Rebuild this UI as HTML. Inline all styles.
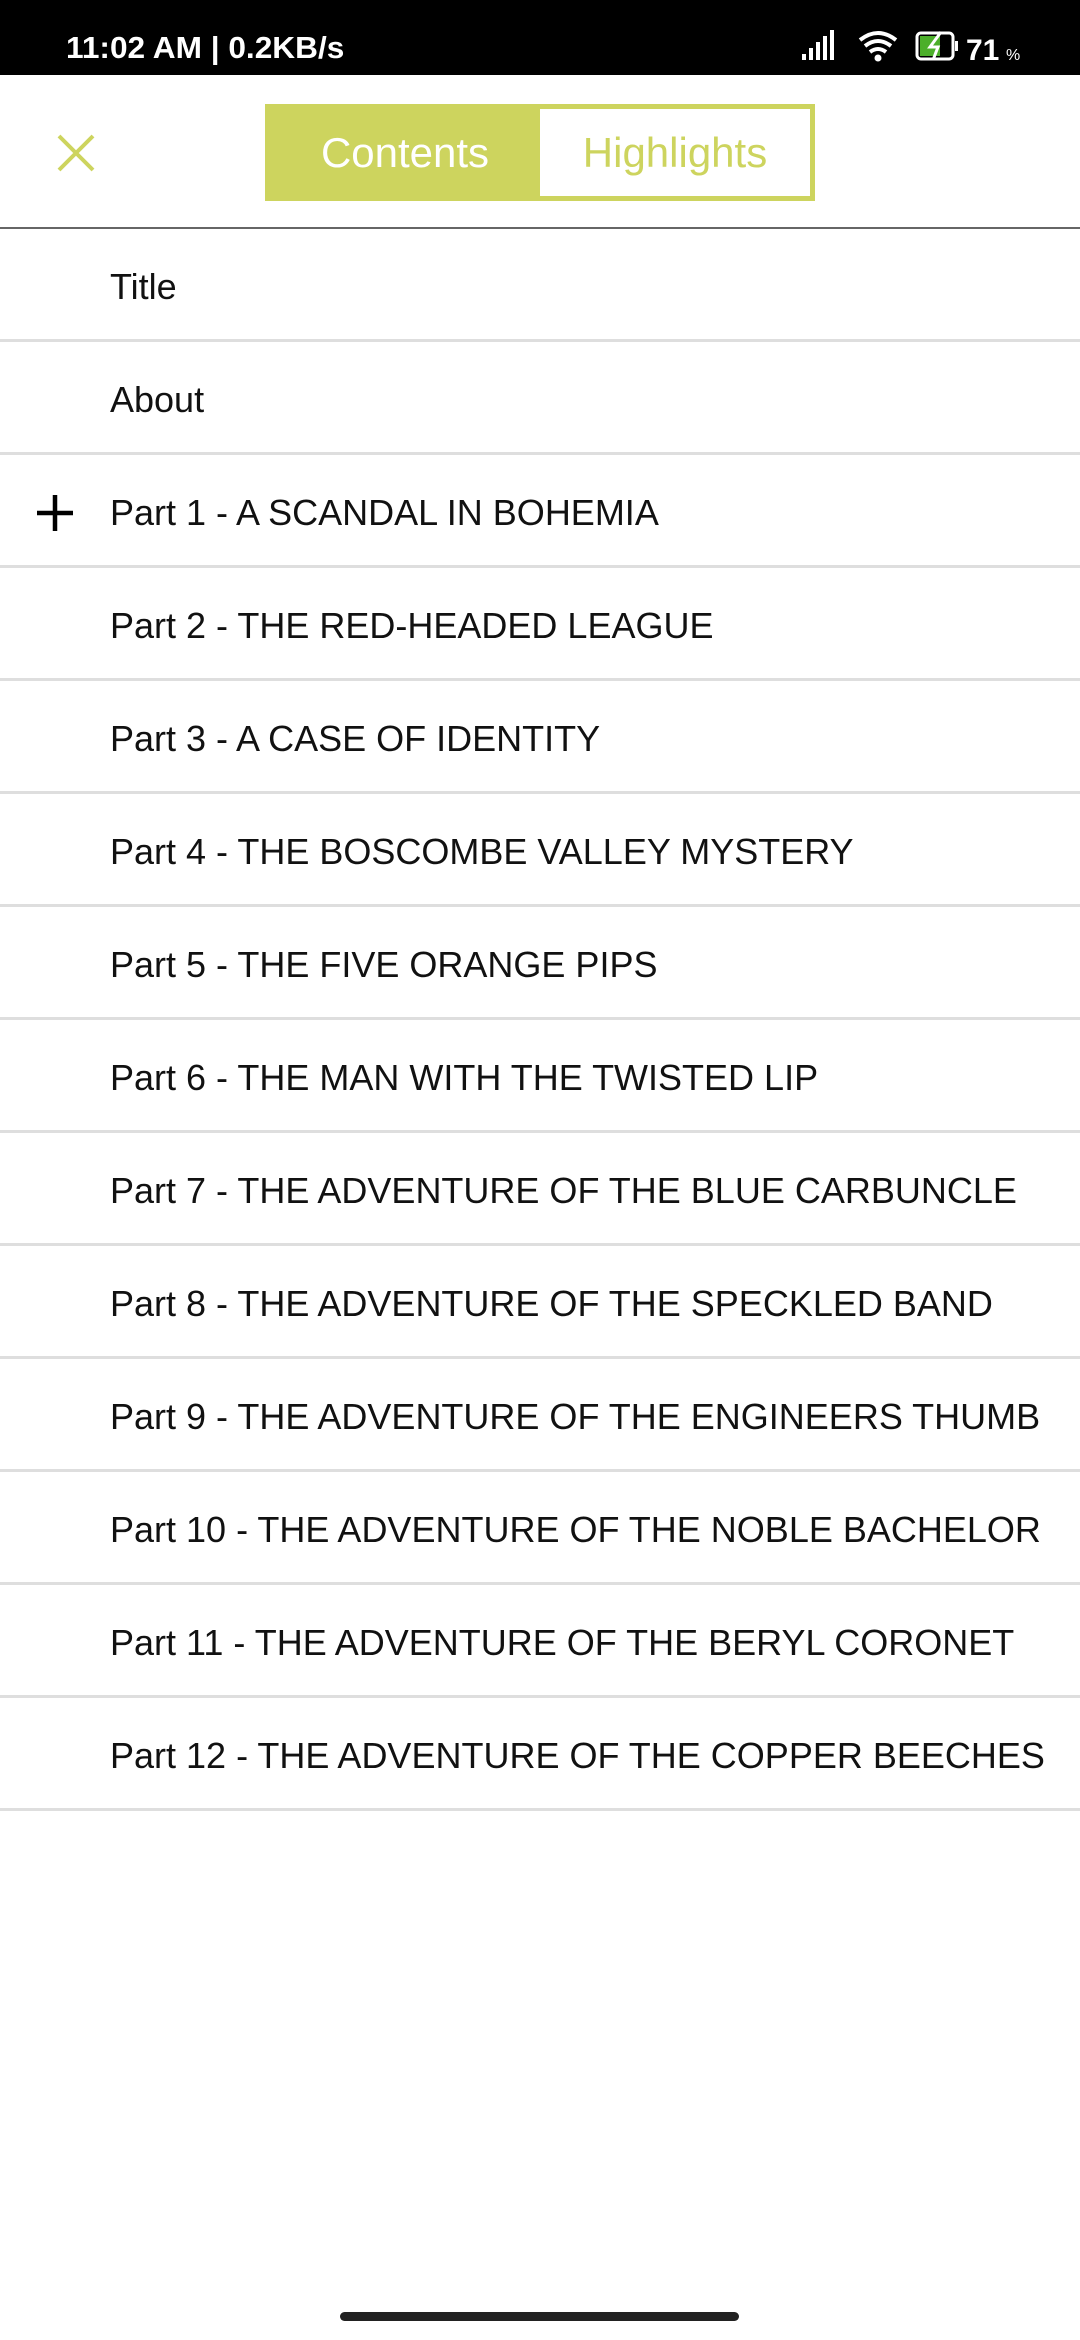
<!DOCTYPE html>
<html><head><meta charset="utf-8"><style>
*{margin:0;padding:0;box-sizing:border-box}
body{width:1080px;height:2340px;background:#fff;font-family:"Liberation Sans",sans-serif;position:relative;overflow:hidden}
.sb{position:absolute;left:0;top:0;width:1080px;height:75px;background:#000;color:#fff}
.sb .t{position:absolute;left:66px;top:30px;font-size:31px;font-weight:bold;transform:scaleX(1.02);transform-origin:left}
.hdr{position:absolute;top:75px;left:0;width:1080px;height:154px;border-bottom:2px solid #666}
.tabs{position:absolute;left:265px;top:29px;width:550px;height:97px;border:5px solid #cdd45e;display:flex}
.tabs div{flex:1;display:flex;align-items:center;justify-content:center;font-size:42px}
.tabs .a{background:#cdd45e;color:#fff}
.tabs .b{color:#cdd45e}
.row{position:absolute;left:0;width:1080px;height:113px;border-bottom:3px solid #dedede}
.row span{position:absolute;left:110px;top:37px;font-size:36px;color:#111;white-space:nowrap;transform:scaleX(1.0);transform-origin:left}
</style></head><body>
<div class="sb"><div class="t">11:02 AM | 0.2KB/s</div>
<svg style="position:absolute;left:800px;top:28px" width="280" height="40">
<rect x="2" y="26" width="4" height="6" fill="#fff"/><rect x="9" y="20" width="4" height="12" fill="#fff"/><rect x="16" y="14" width="4" height="18" fill="#fff"/><rect x="23" y="8" width="4" height="24" fill="#fff"/><rect x="30" y="2" width="4" height="30" fill="#fff"/>
<path d="M60 12 Q78 -2 96 12 M65 18 Q78 8 91 18 M70 24 Q78 18 86 24" stroke="#fff" stroke-width="4" fill="none"/><circle cx="78" cy="30" r="3.5" fill="#fff"/>
<rect x="117" y="5" width="36" height="26" rx="4" stroke="#fff" stroke-width="3" fill="none"/><rect x="120" y="8" width="20" height="20" fill="#4caf2a"/><path d="M141 4 L130 19 L138 19 L133 32" stroke="#fff" stroke-width="3" fill="none"/><rect x="155" y="13" width="3" height="10" fill="#fff"/>
<text x="166" y="32" fill="#fff" font-size="30" font-weight="bold" font-family="Liberation Sans">71</text><text x="206" y="32" fill="#fff" font-size="16" font-family="Liberation Sans">%</text>
</svg></div>
<div class="hdr">
<svg style="position:absolute;left:57px;top:59px" width="38" height="38"><path d="M2 2L36 36M36 2L2 36" stroke="#cdd45e" stroke-width="4"/></svg>
<div class="tabs"><div class="a">Contents</div><div class="b">Highlights</div></div>
</div>
<div class="row" style="top:229px"><span>Title</span></div>
<div class="row" style="top:342px"><span>About</span></div>
<div class="row" style="top:455px"><svg style="position:absolute;left:35px;top:38px" width="40" height="40"><path d="M20 2V38M2 20H38" stroke="#000" stroke-width="4.5"/></svg><span>Part 1 - A SCANDAL IN BOHEMIA</span></div>
<div class="row" style="top:568px"><span>Part 2 - THE RED-HEADED LEAGUE</span></div>
<div class="row" style="top:681px"><span>Part 3 - A CASE OF IDENTITY</span></div>
<div class="row" style="top:794px"><span>Part 4 - THE BOSCOMBE VALLEY MYSTERY</span></div>
<div class="row" style="top:907px"><span>Part 5 - THE FIVE ORANGE PIPS</span></div>
<div class="row" style="top:1020px"><span>Part 6 - THE MAN WITH THE TWISTED LIP</span></div>
<div class="row" style="top:1133px"><span>Part 7 - THE ADVENTURE OF THE BLUE CARBUNCLE</span></div>
<div class="row" style="top:1246px"><span>Part 8 - THE ADVENTURE OF THE SPECKLED BAND</span></div>
<div class="row" style="top:1359px"><span>Part 9 - THE ADVENTURE OF THE ENGINEERS THUMB</span></div>
<div class="row" style="top:1472px"><span>Part 10 - THE ADVENTURE OF THE NOBLE BACHELOR</span></div>
<div class="row" style="top:1585px"><span>Part 11 - THE ADVENTURE OF THE BERYL CORONET</span></div>
<div class="row" style="top:1698px"><span>Part 12 - THE ADVENTURE OF THE COPPER BEECHES</span></div>
<div style="position:absolute;left:340px;top:2312px;width:399px;height:9px;border-radius:5px;background:#222"></div>
</body></html>
